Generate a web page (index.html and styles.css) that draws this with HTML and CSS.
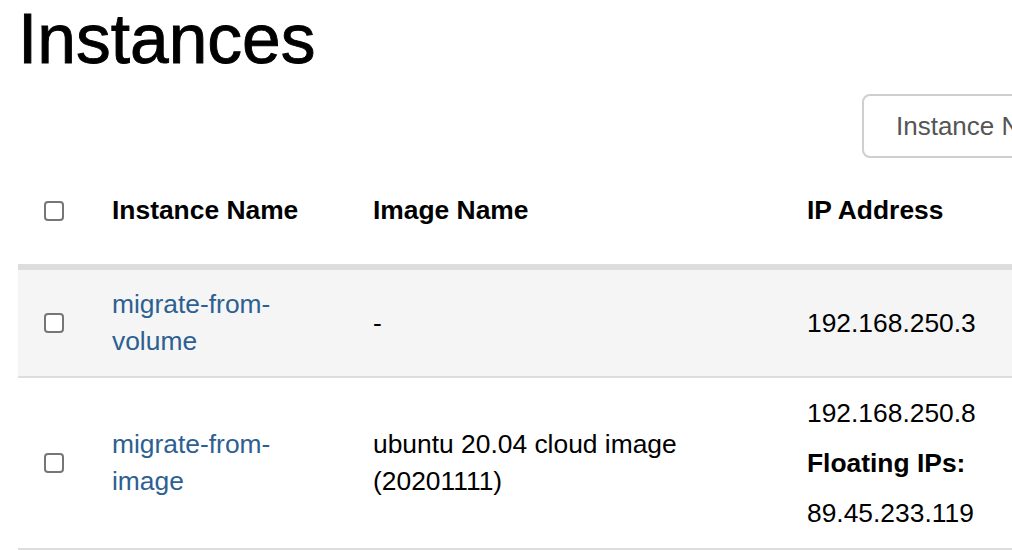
FILE: index.html
```html
<!DOCTYPE html>
<html lang="en">
<head>
<meta charset="utf-8">
<title>Instances</title>
<link rel="stylesheet" href="styles.css">
</head>
<body>
<div class="viewport">
  <div class="page">
    <h1 class="title">Instances</h1>
    <div class="toolbar">
      <div class="filter">Instance Name =</div>
    </div>
    <table class="table">
      <colgroup>
        <col class="c-check">
        <col class="c-name">
        <col class="c-image">
        <col class="c-ip">
      </colgroup>
      <thead>
        <tr>
          <th class="cell-check"><input type="checkbox" class="check"></th>
          <th>Instance Name</th>
          <th>Image Name</th>
          <th>IP Address</th>
        </tr>
      </thead>
      <tbody>
        <tr class="row-odd">
          <td class="cell-check"><input type="checkbox" class="check"></td>
          <td class="cell-name"><a class="link" href="#">migrate-from-volume</a></td>
          <td>-</td>
          <td>192.168.250.3</td>
        </tr>
        <tr>
          <td class="cell-check"><input type="checkbox" class="check"></td>
          <td class="cell-name"><a class="link" href="#">migrate-from-image</a></td>
          <td>ubuntu 20.04 cloud image (20201111)</td>
          <td class="cell-ip">
            <div class="ip-list">
              <div>192.168.250.8</div>
              <div class="ip-label">Floating IPs:</div>
              <div>89.45.233.119</div>
            </div>
          </td>
        </tr>
      </tbody>
    </table>
  </div>
</div>
</body>
</html>
```

FILE: styles.css
```css
html, body {
  margin: 0;
  padding: 0;
  background: #fff;
  overflow: hidden;
}

.viewport {
  width: 1012px;
  height: 550px;
  overflow: hidden;
}

.page {
  width: 1300px;
  padding: 1px 18px 0;
  box-sizing: border-box;
  font-family: "Liberation Sans", Arial, Helvetica, sans-serif;
  color: #000;
}

.title {
  margin: 0;
  font-size: 69.5px;
  line-height: 76px;
  font-weight: 400;
  color: #000;
  -webkit-text-stroke: 0.9px #000;
}

.toolbar {
  display: flex;
  justify-content: flex-end;
  margin-top: 17px;
}

.filter {
  width: 420px;
  height: 64px;
  box-sizing: border-box;
  border: 2px solid #cfcfcf;
  border-radius: 8px;
  padding-left: 32px;
  display: flex;
  align-items: center;
  font-size: 26px;
  color: #555;
  white-space: nowrap;
}

.table {
  width: 100%;
  border-collapse: collapse;
  table-layout: fixed;
  font-size: 26.4px;
  line-height: 37px;
}

.c-check { width: 78px; }
.c-name { width: 261px; }
.c-image { width: 434px; }

.table th {
  text-align: left;
  font-weight: 700;
  color: #000;
  padding: 34px 14px 35px 16px;
  border-bottom: 6px solid #dddddd;
  vertical-align: middle;
}

.table td {
  padding: 16px 14px 16px 16px;
  border-bottom: 2px solid #dddddd;
  vertical-align: middle;
  color: #000;
}

.table th.cell-check,
.table td.cell-check {
  padding-left: 26px;
  padding-right: 0;
}

.table td.cell-name {
  padding-right: 32px;
}

.table td.cell-ip {
  padding-top: 17px;
  padding-bottom: 16px;
}

.row-odd td {
  background: #f5f5f5;
}

.check {
  appearance: none;
  -webkit-appearance: none;
  display: block;
  width: 20px;
  height: 20px;
  margin: 0;
  box-sizing: border-box;
  border: 2px solid #767676;
  border-radius: 4px;
  background: #fff;
}

.link {
  color: #2d6091;
  text-decoration: none;
}

.ip-list {
  display: flex;
  flex-direction: column;
  gap: 13px;
}

.ip-label {
  font-weight: 700;
}
```
